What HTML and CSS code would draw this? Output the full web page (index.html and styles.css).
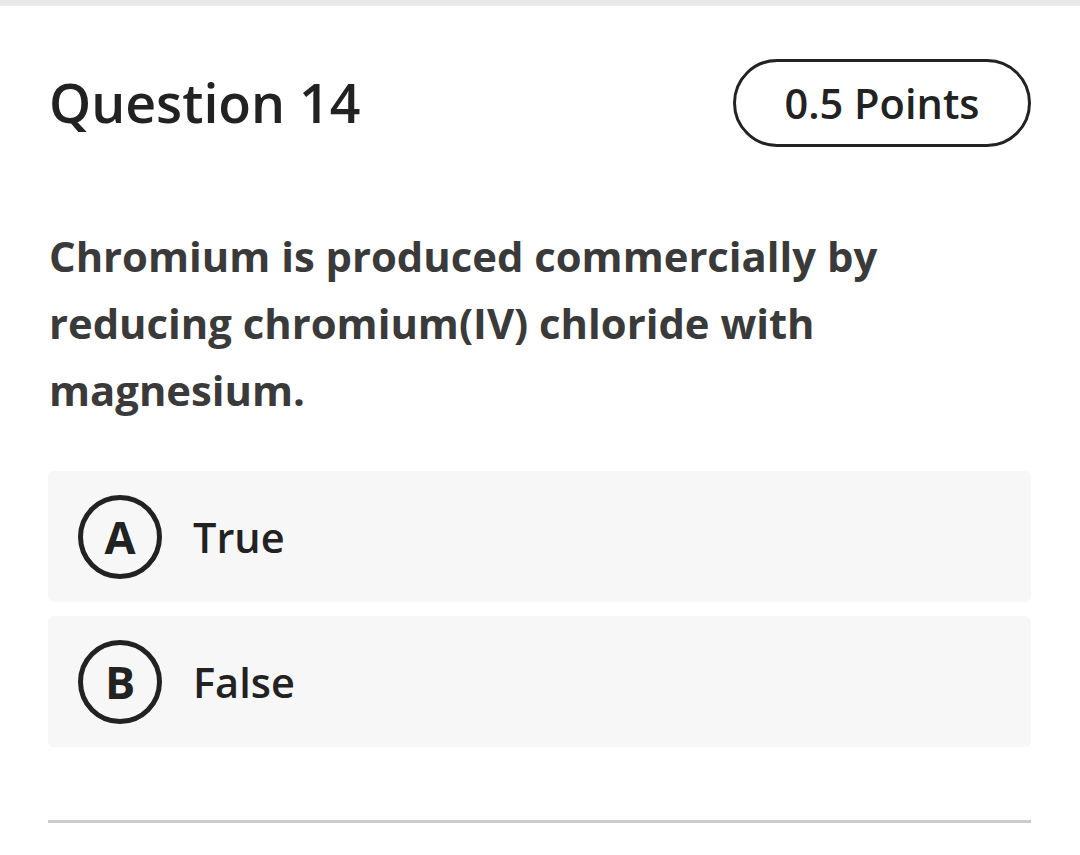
FILE: index.html
```html
<!DOCTYPE html>
<html>
<head>
<meta charset="utf-8">
<link rel="stylesheet" href="styles.css">
</head>
<body>
<div class="topbar"></div>
<main class="card">
  <header class="head">
    <h1 class="title">Question 14</h1>
    <div class="points">0.5 Points</div>
  </header>
  <p class="question">Chromium is produced commercially by reducing chromium(IV) chloride with magnesium.</p>
  <div class="options">
    <div class="option"><span class="letter">A</span><span class="label">True</span></div>
    <div class="option"><span class="letter">B</span><span class="label">False</span></div>
  </div>
  <div class="rule"></div>
</main>
</body>
</html>
```

FILE: styles.css
```css
html, body {
  margin: 0;
  padding: 0;
  background: #ffffff;
}
body {
  font-family: "Open Sans", "Noto Sans", sans-serif;
  color: #222222;
}
.topbar {
  height: 6px;
  background: #e8e8e8;
}
.card {
  padding: 0 49px 0 48px;
}
.head {
  display: flex;
  justify-content: space-between;
  align-items: center;
  padding-top: 53px;
}
.title {
  margin: 0;
  font-size: 53.6px;
  font-weight: 600;
  line-height: 88px;
  color: #222;
  padding-left: 1px;
}
.points {
  box-sizing: border-box;
  width: 298px;
  height: 88px;
  border: 3px solid #222;
  border-radius: 44px;
  display: flex;
  align-items: center;
  justify-content: center;
  font-size: 41.5px;
  font-weight: 600;
  color: #222;
}
.question {
  margin: 75px 0 0 0;
  font-size: 41.8px;
  font-weight: 700;
  line-height: 67px;
  color: #3a3a3a;
  padding-left: 1px;
  max-width: 900px;
}
.options {
  margin-top: 48px;
  display: flex;
  flex-direction: column;
  gap: 14px;
}
.option {
  height: 131px;
  background: #f7f7f7;
  border-radius: 6px;
  display: flex;
  align-items: center;
  padding-left: 30px;
}
.letter {
  box-sizing: border-box;
  width: 84px;
  height: 84px;
  border: 5px solid #222;
  border-radius: 50%;
  display: flex;
  align-items: center;
  justify-content: center;
  font-size: 45px;
  font-weight: 700;
  color: #222;
}
.label {
  margin-left: 31px;
  font-size: 41.5px;
  font-weight: 600;
  color: #222;
}
.rule {
  margin-top: 73px;
  height: 3px;
  background: #cccccc;
}
```
